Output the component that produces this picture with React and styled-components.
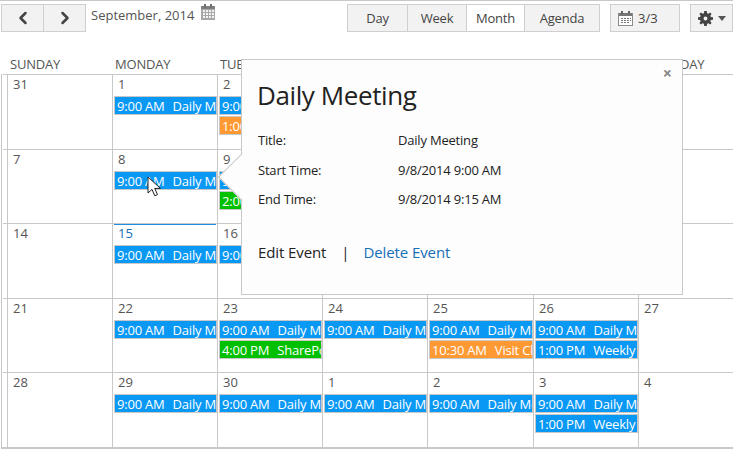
import styled, { createGlobalStyle } from "styled-components";
import { ChevronLeft, ChevronRight } from "lucide-react";

const GlobalStyle = createGlobalStyle`
  html, body {
    margin: 0;
    padding: 0;
    background: #fff;
    overflow: hidden;
  }
  * {
    box-sizing: border-box;
  }
`;

const BLUE = "#0a98f5";
const ORANGE = "#ff9933";
const GREEN = "#00c000";

const daily = { time: "9:00 AM", title: "Daily Meeting", color: BLUE };
const weekly = { time: "1:00 PM", title: "Weekly Sync", color: BLUE };

const weeks = [
  [
    { n: 31 },
    { n: 1, events: [daily] },
    { n: 2, events: [daily, { time: "1:00 PM", title: "Review", color: ORANGE }] },
    { n: 3 },
    { n: 4 },
    { n: 5 },
    { n: 6 },
  ],
  [
    { n: 7 },
    { n: 8, events: [daily] },
    { n: 9, events: [daily, { time: "2:00 PM", title: "SharePoint", color: GREEN }] },
    { n: 10 },
    { n: 11 },
    { n: 12 },
    { n: 13 },
  ],
  [
    { n: 14 },
    { n: 15, today: true, events: [daily] },
    { n: 16, events: [daily] },
    { n: 17 },
    { n: 18 },
    { n: 19 },
    { n: 20 },
  ],
  [
    { n: 21 },
    { n: 22, events: [daily] },
    { n: 23, events: [daily, { time: "4:00 PM", title: "SharePoint", color: GREEN }] },
    { n: 24, events: [daily] },
    { n: 25, events: [daily, { time: "10:30 AM", title: "Visit Client", color: ORANGE }] },
    { n: 26, events: [daily, weekly] },
    { n: 27 },
  ],
  [
    { n: 28 },
    { n: 29, events: [daily] },
    { n: 30, events: [daily] },
    { n: 1, events: [daily] },
    { n: 2, events: [daily] },
    { n: 3, events: [daily, weekly] },
    { n: 4 },
  ],
];

const dayNames = ["SUNDAY", "MONDAY", "TUESDAY", "WEDNESDAY", "THURSDAY", "FRIDAY", "SATURDAY"];

const CountIcon = () => (
  <svg width="15" height="15" viewBox="0 0 15 15" fill="none">
    <rect x="0.5" y="2.500" width="14" height="12" fill="#fff" stroke="#8c8c8c" />
    <rect x="1" y="2" width="13" height="3" fill="#777" />
    <rect x="3" y="0" width="2" height="3" fill="#666" />
    <rect x="10" y="0" width="2" height="3" fill="#666" />
    <path
      d="M3 7h2v1H3zM6 7h2v1H6zM9 7h2v1H9zM12 7h1v1h-1zM3 9h2v1H3zM6 9h2v1H6zM9 9h2v1H9zM12 9h1v1h-1zM3 11h2v1H3zM6 11h2v1H6zM9 11h2v1H9z"
      fill="#777"
    />
  </svg>
);

const MonthGlyph = () => (
  <svg width="14" height="16" viewBox="0 0 14 16">
    <rect x="0" y="2" width="14" height="14" fill="#a8a8a8" />
    <rect x="0" y="2" width="14" height="3" fill="#808080" />
    <rect x="3" y="0" width="2" height="4" fill="#707070" />
    <rect x="9" y="0" width="2" height="4" fill="#707070" />
    <path
      d="M2 6h2v2H2zM5 6h2v2H5zM8 6h2v2H8zM11 6h2v2h-2zM2 9h2v2H2zM5 9h2v2H5zM8 9h2v2H8zM11 9h2v2h-2zM2 12h2v2H2zM5 12h2v2H5zM8 12h2v2H8zM11 12h2v2h-2z"
      fill="#f2f2f2"
    />
  </svg>
);

const GearIcon = () => (
  <svg width="15" height="15" viewBox="0 0 14 14">
    <path
      fillRule="evenodd"
      fill="#444"
      d="M5.8 0h2.4l.3 2 1.1.5L11.3 1.3 12.7 2.7l-1.2 1.7.5 1.1 2 .3v2.4l-2 .3-.5 1.1 1.2 1.700-1.400 1.400-1.700-1.200-1.100.5-.3 2H5.800l-.3-2-1.100-.5-1.700 1.200-1.400-1.400 1.200-1.700-.5-1.100-2-.3V5.800l2-.3.5-1.100-1.200-1.700L2.700 1.300 4.400 2.500 5.500 2zM7 5.200a1.800 1.800 0 1 0 0 3.600 1.800 1.800 0 0 0 0-3.600z"
    />
  </svg>
);

const Cursor = () => (
  <CursorSvg width="16" height="24" viewBox="0 0 16 24">
    <path
      d="M1 1v16l4-3.600 2.800 6.400 2.700-1.200-2.800-6.200H13.500z"
      fill="#fff"
      stroke="#222"
      strokeWidth="1"
    />
  </CursorSvg>
);

const App = () => {
  return (
    <Page>
      <GlobalStyle />
      <Toolbar>
        <ButtonGroup>
          <NavButton aria-label="Previous">
            <ChevronLeft size={20} strokeWidth={3} color="#444" />
          </NavButton>
          <NavButton aria-label="Next">
            <ChevronRight size={20} strokeWidth={3} color="#444" />
          </NavButton>
        </ButtonGroup>
        <MonthLabel>
          September, 2014
          <MonthIcon>
            <MonthGlyph />
          </MonthIcon>
        </MonthLabel>
        <Spacer />
        <ButtonGroup>
          <ViewButton $width={61}>Day</ViewButton>
          <ViewButton $width={60}>Week</ViewButton>
          <ViewButton $width={59} $active>
            Month
          </ViewButton>
          <ViewButton $width={76}>Agenda</ViewButton>
        </ButtonGroup>
        <CountButton>
          <CountIcon />
          3/3
        </CountButton>
        <SettingsButton>
          <GearIcon />
          <Caret />
        </SettingsButton>
      </Toolbar>

      <HeaderRow>
        {dayNames.map((name) => (
          <DayName key={name}>{name}</DayName>
        ))}
      </HeaderRow>
      <Weeks>
        {weeks.map((week, i) => (
          <WeekRow key={i}>
            {week.map((day, j) => (
              <DayCell key={j} $today={day.today}>
                <DayNumber $today={day.today}>{day.n}</DayNumber>
                {day.events &&
                  day.events.map((ev, k) => (
                    <EventBar key={k} $color={ev.color}>
                      <span>{ev.time}</span>
                      <EventTitle>{ev.title}</EventTitle>
                    </EventBar>
                  ))}
              </DayCell>
            ))}
          </WeekRow>
        ))}
      </Weeks>

      <Cursor />

      <Popover>
        <Arrow />
        <CloseButton>×</CloseButton>
        <PopTitle>Daily Meeting</PopTitle>
        <Details>
          <dt>Title:</dt>
          <dd>Daily Meeting</dd>
          <dt>Start Time:</dt>
          <dd>9/8/2014 9:00 AM</dd>
          <dt>End Time:</dt>
          <dd>9/8/2014 9:15 AM</dd>
        </Details>
        <Actions>
          <span>Edit Event</span>
          <Divider>|</Divider>
          <DeleteLink>Delete Event</DeleteLink>
        </Actions>
      </Popover>
    </Page>
  );
};

const Page = styled.div`
  position: relative;
  width: 733px;
  height: 449px;
  overflow: hidden;
  font-family: "Open Sans", "Noto Sans", sans-serif;
  color: #444;
  background: #fff;
  border-top: 1px solid #c8c8c8;
`;

const Toolbar = styled.div`
  display: flex;
  align-items: flex-start;
  height: 48px;
  padding: 3px 0 0 1px;
`;

const ButtonGroup = styled.div`
  display: flex;
`;

const NavButton = styled.button`
  display: flex;
  align-items: center;
  justify-content: center;
  width: 43px;
  height: 28px;
  padding: 0;
  margin-left: -1px;
  border: 1px solid #cfcfcf;
  background: #f2f2f2;
  &:first-child {
    margin-left: 0;
  }
`;

const MonthLabel = styled.div`
  display: flex;
  margin-left: 5px;
  font-size: 13px;
  line-height: 22px;
  color: #555;
`;

const MonthIcon = styled.span`
  margin-left: 7px;
  height: 16px;
`;

const Spacer = styled.div`
  flex: 1;
`;

const ViewButton = styled.button`
  width: ${(p) => p.$width}px;
  height: 28px;
  margin-left: -1px;
  padding: 0;
  border: 1px solid #cfcfcf;
  background: ${(p) => (p.$active ? "#fff" : "#f2f2f2")};
  font: 13px "Open Sans", sans-serif;
  letter-spacing: -0.2px;
  color: #444;
`;

const CountButton = styled.button`
  display: flex;
  align-items: center;
  gap: 5px;
  width: 70px;
  height: 28px;
  margin-left: 10px;
  padding: 0 0 0 7px;
  border: 1px solid #cfcfcf;
  background: #f2f2f2;
  font: 13px "Open Sans", sans-serif;
  color: #444;
`;

const SettingsButton = styled.button`
  display: flex;
  align-items: center;
  gap: 5px;
  width: 43px;
  height: 28px;
  margin-left: 10px;
  padding: 0 0 0 7px;
  border: 1px solid #cfcfcf;
  background: #f2f2f2;
`;

const Caret = styled.span`
  width: 0;
  height: 0;
  border-left: 4px solid transparent;
  border-right: 4px solid transparent;
  border-top: 5px solid #555;
`;

const HeaderRow = styled.div`
  display: grid;
  grid-template-columns: 105px 105px 105px 105px 106px 105px 1fr;
  height: 25px;
  padding-left: 7px;
`;

const DayName = styled.div`
  padding: 6px 0 0 3px;
  font-size: 13px;
  line-height: 18px;
  color: #555;
  letter-spacing: -0.2px;
`;

const Weeks = styled.div`
  margin-left: 1px;
  padding-left: 1px;
  border-left: 1px solid #c8c8c8;
  border-bottom: 2px solid #c8c8c8;
`;

const WeekRow = styled.div`
  display: grid;
  grid-template-columns: 105px 105px 105px 105px 106px 105px 1fr;
  height: 74.5px;
  padding-left: 4px;
  border-top: 1px solid #c8c8c8;
`;

const DayCell = styled.div`
  position: relative;
  min-width: 0;
  padding: 21px 0 0 1px;
  border-left: 1px solid #c8c8c8;
  ${(p) =>
    p.$today &&
    `&::before {
      content: "";
      position: absolute;
      left: 1px;
      right: 1px;
      top: 0;
      height: 1px;
      background: #1f8ee0;
    }`}
`;

const DayNumber = styled.div`
  position: absolute;
  top: 0;
  left: 5px;
  font-size: 13px;
  line-height: 18px;
  color: ${(p) => (p.$today ? "#1570b8" : "#555")};
`;

const EventBar = styled.div`
  display: flex;
  gap: 8px;
  height: 19px;
  margin-bottom: 1px;
  padding-left: 2px;
  overflow: hidden;
  white-space: nowrap;
  border: 1px solid #c8c8c8;
  background: ${(p) => p.$color};
  color: #fff;
  font-size: 13px;
  line-height: 18px;
  letter-spacing: -0.2px;
`;

const EventTitle = styled.span`
  flex: none;
`;

const CursorSvg = styled.svg`
  position: absolute;
  left: 147px;
  top: 175px;
`;

const Popover = styled.div`
  position: absolute;
  left: 241px;
  top: 58px;
  width: 442px;
  height: 236px;
  padding: 18px 16px 0;
  background: #fdfdfd;
  border: 1px solid #c8c8c8;
  color: #222;
`;

const Arrow = styled.div`
  position: absolute;
  left: -17px;
  top: 100px;
  width: 34px;
  height: 34px;
  background: #fdfdfd;
  border-left: 1px solid #c8c8c8;
  border-bottom: 1px solid #c8c8c8;
  transform: rotate(45deg);
`;

const CloseButton = styled.span`
  position: absolute;
  right: 10px;
  top: 2px;
  font-size: 16px;
  font-weight: 700;
  color: #888;
`;

const PopTitle = styled.div`
  position: relative;
  margin-left: -1px;
  font-size: 26px;
  line-height: 34px;
  letter-spacing: -0.4px;
  color: #222;
`;

const Details = styled.dl`
  position: relative;
  display: grid;
  grid-template-columns: 140px 1fr;
  grid-auto-rows: 29.5px;
  margin: 14px 0 0;
  font-size: 13px;
  line-height: 29.5px;
  letter-spacing: -0.2px;
  dd {
    margin: 0;
  }
`;

const Actions = styled.div`
  position: relative;
  display: flex;
  margin-top: 27px;
  font-size: 15px;
  line-height: 20px;
  letter-spacing: -0.1px;
`;

const Divider = styled.span`
  margin: 0 14px 0 15px;
`;

const DeleteLink = styled.span`
  color: #1570b8;
`;

export default App;
